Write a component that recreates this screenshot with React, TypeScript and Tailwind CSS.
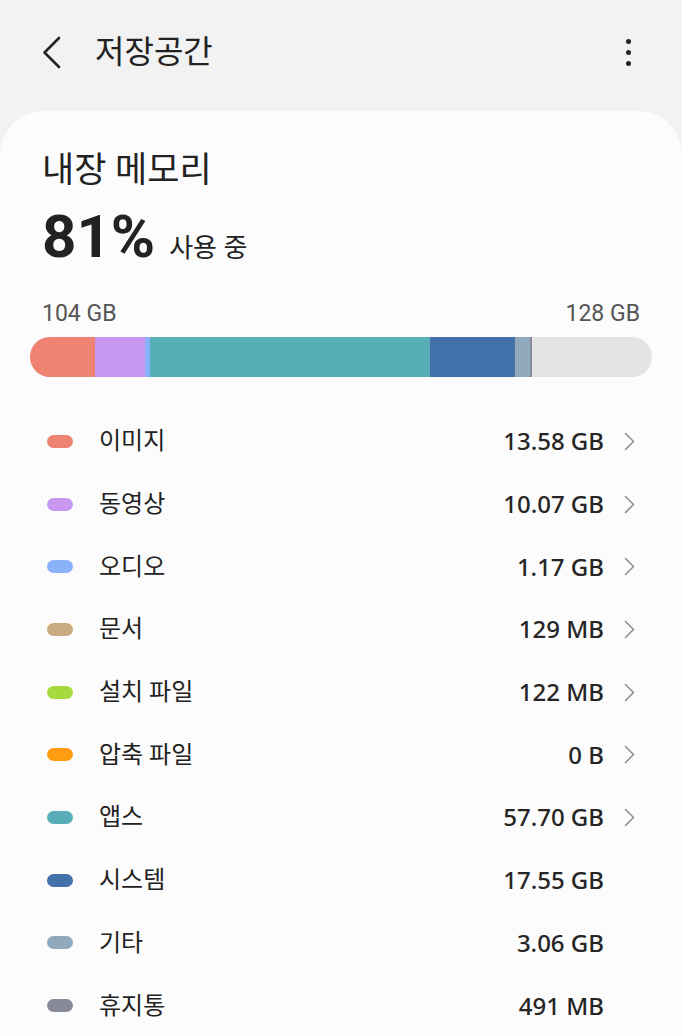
type Item = { label: string; size: string; color: string; link: boolean };

const items: Item[] = [
  { label: "이미지", size: "13.58 GB", color: "bg-[#f08272]", link: true },
  { label: "동영상", size: "10.07 GB", color: "bg-[#c897f0]", link: true },
  { label: "오디오", size: "1.17 GB", color: "bg-[#8ab2fa]", link: true },
  { label: "문서", size: "129 MB", color: "bg-[#cbab82]", link: true },
  { label: "설치 파일", size: "122 MB", color: "bg-[#a6d93c]", link: true },
  { label: "압축 파일", size: "0 B", color: "bg-[#ff9c12]", link: true },
  { label: "앱스", size: "57.70 GB", color: "bg-[#57aeb7]", link: true },
  { label: "시스템", size: "17.55 GB", color: "bg-[#4372aa]", link: false },
  { label: "기타", size: "3.06 GB", color: "bg-[#91a9bd]", link: false },
  { label: "휴지통", size: "491 MB", color: "bg-[#868a9a]", link: false },
];

const font = { fontFamily: '"Roboto", "Noto Sans CJK KR", sans-serif' };

export default function App() {
  return (
    <div className="w-[682px] h-[1036px] overflow-hidden bg-[#f2f2f2] text-[#222]" style={font}>
      {/* top bar */}
      <div className="h-[104px] flex items-center pl-[42px] pr-[51px]">
        <svg width="19" height="33" viewBox="0 0 19 33" fill="none">
          <path d="M17 2 L2.5 16.5 L17 31" stroke="#222" strokeWidth="2.6" strokeLinecap="round" strokeLinejoin="round" />
        </svg>
        <div className="ml-[34px] text-[32px]">저장공간</div>
        <div className="ml-auto flex flex-col gap-[6px]">
          <span className="w-[5px] h-[5px] rounded-full bg-[#222]" />
          <span className="w-[5px] h-[5px] rounded-full bg-[#222]" />
          <span className="w-[5px] h-[5px] rounded-full bg-[#222]" />
        </div>
      </div>

      <div className="mt-[7px] bg-[#fcfcfc] rounded-t-[44px] pt-[38px]">
        <div className="px-[42px]">
          <div className="text-[35px] leading-[44px]">내장 메모리</div>
          <div className="flex items-baseline mt-[11px] h-[66px]">
            <span className="text-[60px] font-bold leading-[66px]">81%</span>
            <span className="ml-[14px] text-[26px]">사용 중</span>
          </div>
          <div className="flex justify-between mt-[30px] text-[23px] leading-[28px] text-[#555]">
            <span>104 GB</span>
            <span>128 GB</span>
          </div>
        </div>

        {/* usage bar */}
        <div className="mx-[30px] mt-[9px] h-[40px] rounded-full overflow-hidden bg-[#e4e4e4] flex">
          <div className="w-[65px] bg-[#f08272]" />
          <div className="w-[50px] bg-[#c897f0]" />
          <div className="w-[5px] bg-[#8ab2fa]" />
          <div className="w-[280px] bg-[#57aeb7]" />
          <div className="w-[85px] bg-[#4372aa]" />
          <div className="w-[15px] bg-[#91a9bd]" />
          <div className="w-[2px] bg-[#868a9a]" />
        </div>

        <div className="mt-[33px] pb-[20px]">
          {items.map((it) => (
            <div key={it.label} className="h-[62.7px] flex items-center pl-[47px] pr-[47px]">
              <span className={`w-[26px] h-[13px] rounded-full ${it.color}`} />
              <span className="ml-[26px] text-[24px]">{it.label}</span>
              <span className="ml-auto text-[24px] font-medium text-[#252525]" style={{ fontFamily: '"Noto Sans", "Roboto", sans-serif' }}>
                {it.size}
              </span>
              <span className="w-[31px] flex justify-end">
                {it.link && (
                  <svg width="11" height="19" viewBox="0 0 11 19" fill="none">
                    <path d="M1.5 1.5 L9.5 9.5 L1.5 17.5" stroke="#8a8a8a" strokeWidth="1.5" strokeLinecap="round" strokeLinejoin="round" />
                  </svg>
                )}
              </span>
            </div>
          ))}
        </div>
      </div>
    </div>
  );
}
